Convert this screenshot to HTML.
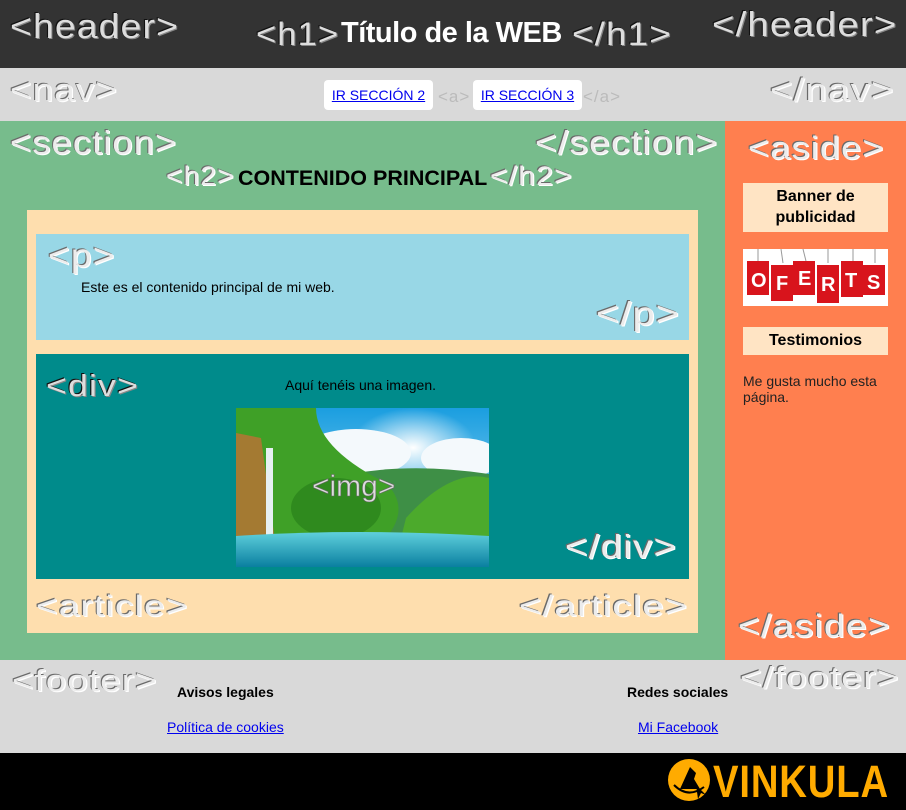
<!DOCTYPE html>
<html><head><meta charset="utf-8">
<style>
*{margin:0;padding:0;box-sizing:border-box}
body{width:906px;height:810px;position:relative;overflow:hidden;font-family:"Liberation Sans",Arial,sans-serif;background:#d9d9d9}
.a{position:absolute}
.t{position:absolute;font-family:"Liberation Sans",sans-serif;color:#ececec;white-space:nowrap;line-height:1;text-shadow:-1px -1px 0 #6a6a6a,1px 1px 0 #fff;letter-spacing:1px;transform-origin:left top}
.dk{text-shadow:-1px -1px 0 #111,1px 1px 0 #888}
a{color:#0000ee}
</style></head><body>
<div class="a" style="left:0;top:0;width:906px;height:68px;background:#333"></div>
<div class="t dk" style="left:10px;top:10px;font-size:34px;color:#ddd;transform:scaleX(1.1)">&lt;header&gt;</div>
<div class="t dk" style="left:712px;top:8px;font-size:34px;color:#ddd;transform:scaleX(1.13)">&lt;/header&gt;</div>
<div class="t dk" style="left:256px;top:18px;font-size:32px;color:#ddd;transform:scaleX(1.08)">&lt;h1&gt;</div>
<div class="a" style="left:341px;top:17px;font-size:29px;font-weight:bold;color:#fff;letter-spacing:-0.5px">Título de la WEB</div>
<div class="t dk" style="left:572px;top:18px;font-size:32px;color:#ddd;transform:scaleX(1.15)">&lt;/h1&gt;</div>

<div class="a" style="left:0;top:68px;width:906px;height:53px;background:#d9d9d9"></div>
<div class="t" style="left:10px;top:74px;font-size:32px;transform:scaleX(1.15)">&lt;nav&gt;</div>
<div class="t" style="left:770px;top:74px;font-size:32px;transform:scaleX(1.2)">&lt;/nav&gt;</div>
<div class="a" style="left:324px;top:80px;width:109px;height:30px;background:#fff;border-radius:4px;font-size:14px;line-height:30px;text-align:center"><a href="#">IR SECCIÓN 2</a></div>
<div class="t" style="left:438px;top:88px;font-size:17px;color:#bbb;text-shadow:none">&lt;a&gt;</div>
<div class="a" style="left:473px;top:80px;width:109px;height:30px;background:#fff;border-radius:4px;font-size:14px;line-height:30px;text-align:center"><a href="#">IR SECCIÓN 3</a></div>
<div class="t" style="left:583px;top:88px;font-size:17px;color:#bbb;text-shadow:none">&lt;/a&gt;</div>

<div class="a" style="left:0;top:121px;width:725px;height:539px;background:#77bc8c"></div>
<div class="t" style="left:10px;top:126px;font-size:33px;transform:scaleX(1.1)">&lt;section&gt;</div>
<div class="t" style="left:535px;top:126px;font-size:33px;transform:scaleX(1.13)">&lt;/section&gt;</div>
<div class="t" style="left:166px;top:163px;font-size:27px;transform:scaleX(1.05)">&lt;h2&gt;</div>
<div class="a" style="left:238px;top:166px;font-size:21.5px;font-weight:bold;color:#000">CONTENIDO PRINCIPAL</div>
<div class="t" style="left:490px;top:163px;font-size:27px;transform:scaleX(1.12)">&lt;/h2&gt;</div>

<div class="a" style="left:27px;top:210px;width:671px;height:423px;background:#fedeae"></div>
<div class="a" style="left:36px;top:234px;width:653px;height:106px;background:#98d7e6"></div>
<div class="t" style="left:48px;top:239px;font-size:33px;transform:scaleX(1.13)">&lt;p&gt;</div>
<div class="a" style="left:81px;top:279px;font-size:14px;color:#000">Este es el contenido principal de mi web.</div>
<div class="t" style="left:596px;top:297px;font-size:33px;transform:scaleX(1.2)">&lt;/p&gt;</div>

<div class="a" style="left:36px;top:354px;width:653px;height:225px;background:#008b8b"></div>
<div class="t dk" style="left:46px;top:370px;font-size:31px;color:#ddd;transform:scaleX(1.15)">&lt;div&gt;</div>
<div class="a" style="left:285px;top:377px;font-size:14px;color:#000">Aquí tenéis una imagen.</div>
<svg class="a" style="left:236px;top:408px" width="253" height="159" viewBox="0 0 253 159">
<defs><linearGradient id="sky" x1="0" y1="0" x2="0" y2="1"><stop offset="0" stop-color="#1a9ee0"/><stop offset="1" stop-color="#bfe6f5"/></linearGradient>
<linearGradient id="wat" x1="0" y1="0" x2="0" y2="1"><stop offset="0" stop-color="#5fd0dc"/><stop offset="1" stop-color="#0a7fa0"/></linearGradient>
<radialGradient id="sun" cx="0.7" cy="0.25" r="0.25"><stop offset="0" stop-color="#fff"/><stop offset="1" stop-color="#fff" stop-opacity="0"/></radialGradient></defs>
<rect width="253" height="159" fill="url(#sky)"/>
<rect width="253" height="159" fill="url(#sun)"/>
<ellipse cx="120" cy="45" rx="55" ry="24" fill="#f4f9fc"/><ellipse cx="225" cy="50" rx="40" ry="20" fill="#f4f9fc"/>
<path d="M90 72 Q160 52 253 66 L253 130 L90 130Z" fill="#3e8f46"/>
<path d="M0 0 L80 0 Q80 40 150 75 Q175 100 150 130 L0 130Z" fill="#3fa027"/>
<ellipse cx="100" cy="100" rx="45" ry="30" fill="#2f8a1e"/>
<path d="M170 110 Q215 60 253 70 L253 130 L165 130Z" fill="#4caa2c"/>
<path d="M0 25 L25 30 L40 140 L0 140Z" fill="#a47a32"/>
<rect x="30" y="40" width="7" height="100" fill="#e6f0f2"/>
<path d="M0 128 Q120 120 253 128 L253 159 L0 159Z" fill="url(#wat)"/>
<text x="76" y="88" font-family="Liberation Sans,sans-serif" font-size="30" fill="#ddd" stroke="#666" stroke-width="0.6">&lt;img&gt;</text>
</svg>
<div class="t" style="left:565px;top:530px;font-size:33px;transform:scaleX(1.17)">&lt;/div&gt;</div>
<div class="t" style="left:36px;top:592px;font-size:30px;transform:scaleX(1.23)">&lt;article&gt;</div>
<div class="t" style="left:519px;top:592px;font-size:30px;transform:scaleX(1.27)">&lt;/article&gt;</div>

<div class="a" style="left:725px;top:121px;width:181px;height:539px;background:#ff7f4f"></div>
<div class="t" style="left:748px;top:132px;font-size:32px;transform:scaleX(1.13)">&lt;aside&gt;</div>
<div class="a" style="left:743px;top:183px;width:145px;height:49px;background:#ffe4c4;font-size:16px;font-weight:bold;text-align:center;line-height:21px;padding-top:3px">Banner de<br>publicidad</div>
<svg class="a" style="left:743px;top:249px" width="145" height="57" viewBox="0 0 145 57">
<rect width="145" height="57" fill="#fff"/>
<g stroke="#999" stroke-width="1"><line x1="15" y1="0" x2="15" y2="12"/><line x1="38" y1="0" x2="40" y2="14"/><line x1="60" y1="0" x2="63" y2="12"/><line x1="85" y1="0" x2="85" y2="14"/><line x1="110" y1="0" x2="110" y2="12"/><line x1="132" y1="0" x2="132" y2="14"/></g>
<g fill="#d8141c"><rect x="4" y="12" width="22" height="34"/><rect x="28" y="16" width="22" height="36"/><rect x="50" y="12" width="22" height="34"/><rect x="74" y="16" width="22" height="38"/><rect x="98" y="12" width="22" height="36"/><rect x="120" y="16" width="22" height="30"/></g>
<g font-family="Liberation Sans,sans-serif" font-weight="bold" font-size="20" fill="#fff"><text x="8" y="38">O</text><text x="33" y="41">F</text><text x="55" y="36">E</text><text x="78" y="42">R</text><text x="102" y="38">T</text><text x="124" y="40">S</text></g>
</svg>
<div class="a" style="left:743px;top:327px;width:145px;height:28px;background:#ffe4c4;font-size:16px;font-weight:bold;text-align:center;line-height:28px">Testimonios</div>
<div class="a" style="left:743px;top:373px;width:150px;font-size:14px;line-height:16px;color:#222">Me gusta mucho esta página.</div>
<div class="t" style="left:738px;top:610px;font-size:32px;transform:scaleX(1.17)">&lt;/aside&gt;</div>

<div class="a" style="left:0;top:660px;width:906px;height:93px;background:#d9d9d9"></div>
<div class="t" style="left:12px;top:665px;font-size:31px;transform:scaleX(1.18)">&lt;footer&gt;</div>
<div class="t" style="left:740px;top:662px;font-size:31px;transform:scaleX(1.2)">&lt;/footer&gt;</div>
<div class="a" style="left:177px;top:684px;font-size:14px;font-weight:bold">Avisos legales</div>
<div class="a" style="left:167px;top:719px;font-size:14px"><a href="#">Política de cookies</a></div>
<div class="a" style="left:627px;top:684px;font-size:14px;font-weight:bold">Redes sociales</div>
<div class="a" style="left:638px;top:719px;font-size:14px"><a href="#">Mi Facebook</a></div>

<div class="a" style="left:0;top:753px;width:906px;height:57px;background:#000"></div>
<div class="a" style="left:668px;top:759px;width:42px;height:42px;border-radius:50%;background:#ffab00"></div>
<svg class="a" style="left:668px;top:759px" width="42" height="42" viewBox="0 0 42 42"><path d="M12 30 L22 8 L28 14 L26 20 L32 30 Z" fill="#000"/><path d="M6 26 Q20 40 36 28" stroke="#000" stroke-width="2" fill="none"/><path d="M28 26 L30 40 L33 34 L38 36Z" fill="#000"/></svg>
<div class="a" style="left:713px;top:756px;font-size:45px;font-weight:bold;color:#ffab00;letter-spacing:1px;transform:scaleX(0.85);transform-origin:left top">VINKULA</div>
</body></html>
